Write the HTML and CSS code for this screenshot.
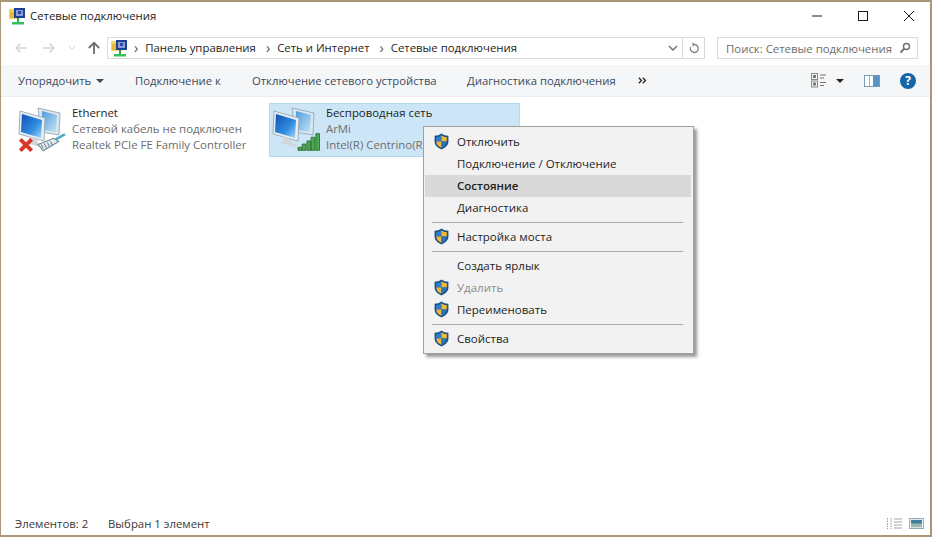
FILE: index.html
```html
<!DOCTYPE html>
<html lang="ru">
<head>
<meta charset="utf-8">
<title>Сетевые подключения</title>
<link rel="stylesheet" href="styles.css">
</head>
<body>
<svg class="defs" width="0" height="0" aria-hidden="true">
  <defs>
    <linearGradient id="scr" x1="0" y1="0" x2="1" y2="1"><stop offset="0" stop-color="#1450b4"/><stop offset=".6" stop-color="#2f8de0"/><stop offset="1" stop-color="#a9d8f5"/></linearGradient>
    <linearGradient id="scr2" x1="0" y1="0" x2="1" y2="1"><stop offset="0" stop-color="#4f9bdc"/><stop offset="1" stop-color="#c3e3f6"/></linearGradient>
    <symbol id="shield" viewBox="0 0 16 16">
      <path d="M8 .5C6 2 4 2.600 1.500 2.600V8c0 3.600 3 6 6.500 7.500 3.500-1.500 6.500-3.900 6.500-7.500V2.600C12 2.600 10 2 8 .5z" fill="#1b4f86"/>
      <path d="M8 2v6H3V3.800C5 3.800 6.500 3.200 8 2z" fill="#2f80c4"/>
      <path d="M8 2c1.500 1.200 3 1.800 5 1.800V8H8z" fill="#f0b93e"/>
      <path d="M3 8h5v6C5.500 12.800 3.200 11 3 8z" fill="#f0b93e"/>
      <path d="M8 8h5c-.2 3-2.500 4.800-5 6z" fill="#2a76b8"/>
    </symbol>
    <symbol id="net" viewBox="0 0 17 17">
      <path d="M0 1h11v10H0z" fill="#f2d45c"/>
      <rect x="1" y="4" width="4" height="6" fill="#e6b93a"/>
      <rect x="5" y="0" width="11" height="10" fill="#1f3f92"/>
      <rect x="7" y="2" width="7" height="6" fill="#8d9bd6"/>
      <rect x="9" y="3" width="3" height="3" fill="#2a4aa6"/>
      <rect x="8" y="10" width="2" height="4" fill="#2fa84a"/>
      <rect x="3" y="14" width="12" height="2.500" fill="#35c060"/>
    </symbol>
    <symbol id="pcs" viewBox="0 0 48 44">
      <path d="M20 3 42 8l-1 22-18-3z" fill="#dbe6ee" stroke="#8a9eae" stroke-width=".8"/>
      <path d="M24 6l15 4-1 17-14-2z" fill="url(#scr2)"/>
      <path d="M2 6 27 13l-1 23L1 29z" fill="#e6eef3" stroke="#8d9fad" stroke-width=".8"/>
      <path d="M4 9l20 6-1 18L3 27z" fill="url(#scr)"/>
      <path d="M10 31l9 3 1 4 6 2-3 2-15-4 4-2z" fill="#cfd6da"/>
    </symbol>
  </defs>
</svg>
<div class="window">
  <header class="titlebar">
    <svg class="small-icon"><use href="#net"/></svg>
    <span class="title">Сетевые подключения</span>
    <div class="win-buttons">
      <svg class="win-btn" viewBox="0 0 12 12"><path d="M1 6h10" stroke="#1a1a1a" stroke-width="1"/></svg>
      <svg class="win-btn" viewBox="0 0 12 12"><rect x="1.500" y="1.500" width="9" height="9" fill="none" stroke="#1a1a1a"/></svg>
      <svg class="win-btn" viewBox="0 0 12 12"><path d="M1 1l10 10M11 1 1 11" stroke="#1a1a1a"/></svg>
    </div>
  </header>
  <nav class="addressrow">
    <div class="navs">
      <svg class="nav nav-back" viewBox="0 0 14 12"><path d="M13 6H2M6.500 1.500 2 6l4.500 4.500" fill="none" stroke="#d4d6d8" stroke-width="1.600"/></svg>
      <svg class="nav nav-fwd" viewBox="0 0 14 12"><path d="M1 6h11M7.500 1.500 12 6l-4.500 4.500" fill="none" stroke="#d4d6d8" stroke-width="1.600"/></svg>
      <svg class="nav-drop" viewBox="0 0 8 4"><path d="M1 0l3 3 3-3" fill="none" stroke="#d4d6d8"/></svg>
      <svg class="nav nav-up" viewBox="0 0 14 14"><path d="M7 13V2M1.800 7 7 1.800 12.200 7" fill="none" stroke="#6d6d6d" stroke-width="1.800"/></svg>
    </div>
    <div class="addressbar">
      <svg class="small-icon addr-icon"><use href="#net"/></svg>
      <span class="crumb-sep">›</span><span class="crumb">Панель управления</span>
      <span class="crumb-sep">›</span><span class="crumb">Сеть и Интернет</span>
      <span class="crumb-sep">›</span><span class="crumb">Сетевые подключения</span>
      <svg class="addr-drop" viewBox="0 0 10 6"><path d="M1 1l4 4 4-4" fill="none" stroke="#6d6d6d" stroke-width="1.400"/></svg>
      <span class="addr-div"></span>
      <svg class="refresh" viewBox="0 0 12 12"><path d="M6.500 2.500A4 4 0 1 1 2.600 5" fill="none" stroke="#808080" stroke-width="1.300"/><path d="M4.500.500v4l3-2z" fill="#808080"/></svg>
    </div>
    <div class="searchbox">
      <span>Поиск: Сетевые подключения</span>
      <svg class="search-icon" viewBox="0 0 12 12"><circle cx="7.500" cy="4.500" r="3" fill="none" stroke="#6d6d6d" stroke-width="1.400"/><path d="M5.300 6.700 1.500 10.500" stroke="#6d6d6d" stroke-width="1.800"/></svg>
    </div>
  </nav>
  <div class="toolbar">
    <span class="tool tool-sort">Упорядочить <i class="caret"></i></span>
    <span class="tool tool-conn">Подключение к</span>
    <span class="tool tool-off">Отключение сетевого устройства</span>
    <span class="tool tool-diag">Диагностика подключения</span>
    <svg class="tool-more" viewBox="0 0 9 7"><path d="M.8.800 3.500 3.500.8 6.200M4.800.800 7.500 3.500 4.800 6.200" fill="none" stroke="#222" stroke-width="1.300"/></svg>
    <div class="tool-right">
      <svg class="views" viewBox="0 0 16 15"><rect x=".5" y=".5" width="6" height="6" fill="#f4f4f4" stroke="#8a8a8a"/><rect x=".5" y="8" width="6" height="6" fill="#f4f4f4" stroke="#8a8a8a"/><rect x="2" y="2" width="3" height="3" fill="#6b7f6b"/><rect x="2" y="9.500" width="3" height="3" fill="#6b7f6b"/><path d="M9 2h6M9 5h4M9 9.500h6M9 12.500h4" stroke="#777"/></svg>
      <i class="caret caret-view"></i>
      <svg class="pane" viewBox="0 0 16 12"><rect x=".5" y=".5" width="15" height="11" fill="#fff" stroke="#7a9bb5"/><path d="M5.500 1v10" stroke="#9ab4c8"/><rect x="9" y="1" width="6" height="10" fill="#5b94c4"/></svg>
      <span class="help">?</span>
    </div>
  </div>
  <main class="content">
    <div class="conn conn-eth">
      <div class="conn-icon">
        <svg class="pcs"><use href="#pcs"/></svg>
        <svg class="overlay-x" viewBox="0 0 14 14"><path d="M2 2l10 10M12 2 2 12" stroke="#d8352b" stroke-width="3.400"/></svg>
        <svg class="overlay-plug" viewBox="0 0 28 18"><path d="M1 11 16 5l5 3L6 17z" fill="#e3eaed" stroke="#6f8694"/><path d="M4 11l2 4M7 10l2 4M10 9l2 4M13 8l2 4" stroke="#6f8694"/><path d="M18 6 27 1" stroke="#4aa6c9" stroke-width="2.400"/></svg>
      </div>
      <div class="conn-text">
        <div class="conn-name">Ethernet</div>
        <div class="conn-sub">Сетевой кабель не подключен</div>
        <div class="conn-sub">Realtek PCIe FE Family Controller</div>
      </div>
    </div>
    <div class="conn conn-wifi">
      <div class="conn-icon">
        <svg class="pcs"><use href="#pcs"/></svg>
        <svg class="overlay-bars" viewBox="0 0 22 18"><path d="M1 17v-3h3.500v3zM5 17v-6h3.500v6zM9.500 17V8H13v9zM13.500 17V4.500H17V17zM18 17V1h3.500v16z" fill="#4fa84f" stroke="#1f6b2a" stroke-width=".8"/></svg>
      </div>
      <div class="conn-text">
        <div class="conn-name">Беспроводная сеть</div>
        <div class="conn-sub">ArMi</div>
        <div class="conn-sub">Intel(R) Centrino(R</div>
      </div>
    </div>
  </main>
  <footer class="statusbar">
    <span class="status-count">Элементов: 2</span>
    <span>Выбран 1 элемент</span>
    <div class="status-right">
      <svg class="status-list" viewBox="0 0 17 13"><path d="M1.500 1v11M5 1v11" stroke="#9a9a9a" stroke-dasharray="1.500 1"/><path d="M8 2h8M8 5h8M8 8h8M8 11h8" stroke="#a8a8a8"/></svg>
      <svg class="status-big" viewBox="0 0 16 12"><rect x=".5" y=".5" width="15" height="11" fill="#fff" stroke="#8aa0ae"/><rect x="2" y="2" width="12" height="8" fill="#3f7f9f"/><rect x="2" y="6" width="12" height="4" fill="#9fb7b0"/></svg>
    </div>
  </footer>
</div>
<ul class="menu">
  <li class="item"><svg class="shield"><use href="#shield"/></svg>Отключить</li>
  <li class="item">Подключение / Отключение</li>
  <li class="item item-active">Состояние</li>
  <li class="item">Диагностика</li>
  <li class="sep"></li>
  <li class="item"><svg class="shield"><use href="#shield"/></svg>Настройка моста</li>
  <li class="sep"></li>
  <li class="item">Создать ярлык</li>
  <li class="item item-disabled"><svg class="shield"><use href="#shield"/></svg>Удалить</li>
  <li class="item"><svg class="shield"><use href="#shield"/></svg>Переименовать</li>
  <li class="sep"></li>
  <li class="item"><svg class="shield"><use href="#shield"/></svg>Свойства</li>
</ul>
</body>
</html>
```
FILE: styles.css
```css
* { box-sizing: border-box; }
html, body { margin: 0; height: 100%; }
body {
  width: 932px;
  height: 537px;
  overflow: hidden;
  position: relative;
  font-family: "Open Sans", "Noto Sans", sans-serif;
  font-size: 11.4px;
  color: #1e1e1e;
  background: #fff;
}
.defs { position: absolute; }
.window {
  width: 932px;
  height: 537px;
  display: flex;
  flex-direction: column;
  border: 1px solid #a89878;
  border-width: 2px 2px 2px 1px;
  background: #fff;
}
.titlebar {
  height: 29px;
  flex: none;
  display: flex;
  align-items: center;
  padding-left: 8px;
}
.small-icon { width: 17px; height: 17px; flex: none; }
.title { margin-left: 4px; margin-bottom: 2px; }
.win-buttons { margin-left: auto; display: flex; gap: 34px; padding-right: 15px; margin-top: -2px; }
.win-btn { width: 12px; height: 12px; display: block; }
.addressrow {
  height: 34px;
  flex: none;
  display: flex;
  align-items: center;
  padding-left: 13px;
}
.navs { display: flex; align-items: center; width: 93px; flex: none; }
.nav { display: block; }
.nav-back, .nav-fwd { width: 14px; height: 12px; }
.nav-fwd { margin-left: 14px; }
.nav-drop { width: 8px; height: 4px; margin-left: 12px; }
.nav-up { width: 14px; height: 14px; margin-left: 11px; }
.addressbar {
  width: 598px;
  height: 22px;
  flex: none;
  display: flex;
  align-items: center;
  border: 1px solid #dadbdc;
  padding-left: 3px;
}
.crumb-sep { color: #555; margin: 0 7px 0 5px; font-size: 14px; line-height: 18px; }
.addr-icon { margin-right: 1px; }
.crumb { margin-right: 5px; margin-bottom: 2px; }
.addr-drop { width: 10px; height: 6px; margin-left: auto; }
.addr-div { width: 1px; height: 20px; background: #dadbdc; margin: 0 5px 0 4px; }
.refresh { width: 12px; height: 12px; margin-right: 4px; }
.searchbox {
  width: 201px;
  height: 22px;
  flex: none;
  margin-left: 12px;
  display: flex;
  align-items: center;
  justify-content: space-between;
  border: 1px solid #dadbdc;
  padding: 0 6px 0 8px;
  color: #6d6d6d;
}
.search-icon { width: 12px; height: 12px; }
.toolbar {
  height: 32px;
  flex: none;
  display: flex;
  align-items: center;
  padding-left: 17px;
  background: #f5f6f7;
  border-bottom: 1px solid #eceded;
  color: #3a4a5c;
  font-size: 11.3px;
}
.tool { white-space: nowrap; }
.tool-sort { width: 117px; display: flex; align-items: center; gap: 5px; }
.tool-conn { width: 117px; }
.tool-off { width: 215px; }
.tool-diag { width: 171px; }
.tool-more { width: 9px; height: 7px; }
.caret {
  display: inline-block;
  width: 0;
  height: 0;
  border: 4px solid transparent;
  border-top: 4px solid #3a4a5c;
  border-bottom: 0;
}
.tool-right { margin-left: auto; display: flex; align-items: center; padding-right: 14px; }
.views { width: 16px; height: 15px; }
.caret-view { margin-left: 9px; border-top-color: #222; }
.pane { width: 16px; height: 12px; margin-left: 20px; }
.help {
  width: 16px;
  height: 16px;
  margin-left: 20px;
  border-radius: 50%;
  background: #1466a8;
  color: #fff;
  font-weight: 700;
  font-size: 12px;
  line-height: 16px;
  text-align: center;
}
.content {
  flex: 1;
  display: flex;
  align-items: flex-start;
  padding: 6px 0 0 14px;
  background: #fff;
}
.conn { display: flex; height: 54px; padding-top: 1px; border: 1px solid transparent; }
.conn-eth { width: 254px; }
.conn-wifi { width: 251px; background: #cde6f7; border-color: #b4daf2; }
.conn-icon { width: 56px; height: 50px; position: relative; flex: none; }
.pcs { position: absolute; left: 2px; top: 0; width: 48px; height: 44px; }
.overlay-x { position: absolute; left: 2px; top: 32px; width: 16px; height: 16px; }
.overlay-plug { position: absolute; left: 21px; top: 28px; width: 29px; height: 19px; }
.overlay-bars { position: absolute; left: 27px; top: 27px; width: 23px; height: 20px; }
.conn-text { line-height: 16px; white-space: nowrap; }
.conn-sub { color: #6d6d6d; }
.statusbar {
  height: 25px;
  flex: none;
  display: flex;
  align-items: center;
  padding: 2px 0 0 14px;
  color: #3a3a3a;
}
.status-count { width: 93px; }
.status-right { margin-left: auto; display: flex; align-items: center; gap: 6px; padding-right: 6px; }
.status-list { width: 17px; height: 13px; }
.status-big { width: 15px; height: 11px; }
.menu {
  position: absolute;
  left: 423px;
  top: 126px;
  width: 271px;
  height: 228px;
  margin: 0;
  padding: 4px 2px 4px 1px;
  list-style: none;
  background: #f2f2f2;
  border: 1px solid #a0a0a0;
  box-shadow: 3px 3px 3px rgba(70, 70, 70, .55);
  color: #1e1e1e;
  font-size: 11.5px;
}
.item {
  height: 22px;
  line-height: 22px;
  padding-left: 32px;
  position: relative;
}
.shield { position: absolute; left: 8px; top: 2px; width: 17px; height: 17px; }
.item-active { background: #d9d9d9; font-weight: 600; }
.item-disabled { color: #8c8c8c; }
.sep { height: 7px; padding: 3px 8px 3px 7px; }
.sep::before { content: ""; display: block; height: 1px; background: #a8a8a8; }
```
